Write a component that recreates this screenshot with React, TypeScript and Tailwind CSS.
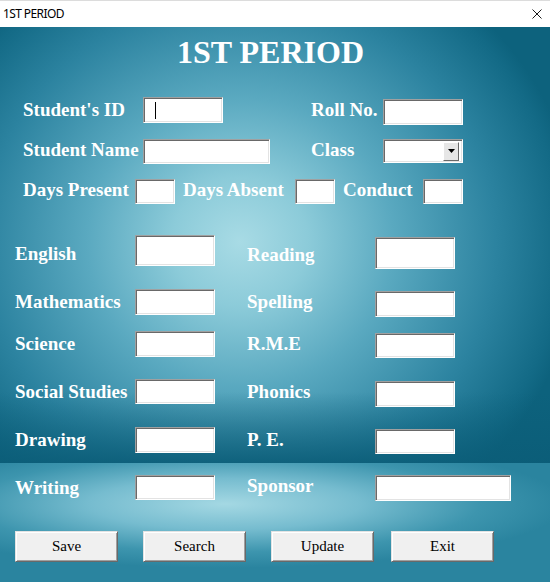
import type { ReactNode } from "react";

// Formulario "1ST PERIOD" (estilo WinForms): barra de título + panel turquesa.

const serif = "font-['Liberation_Serif','Times_New_Roman',serif]";

function Label({ children, className = "" }: { children: ReactNode; className?: string }) {
  return (
    <span
      className={`${serif} shrink-0 whitespace-nowrap text-[19px] font-bold leading-[22px] text-white ${className}`}
    >
      {children}
    </span>
  );
}

// Caja hundida (borde 3D clásico)
function Field({ className = "", children }: { className?: string; children?: ReactNode }) {
  return (
    <div
      className={`relative shrink-0 border border-t-[#a0a0a0] border-l-[#a0a0a0] border-b-white border-r-white bg-white shadow-[inset_1px_1px_0_#696969,inset_-1px_-1px_0_#e3e3e3] ${className}`}
    >
      {children}
    </div>
  );
}

function Boton({ children, className = "" }: { children: ReactNode; className?: string }) {
  return (
    <button
      type="button"
      className={`${serif} h-[31px] w-[103px] shrink-0 border border-t-[#e3e3e3] border-l-[#e3e3e3] border-b-[#696969] border-r-[#696969] bg-[#f0f0f0] text-[15px] text-black shadow-[inset_1px_1px_0_#ffffff,inset_-1px_-1px_0_#a0a0a0] ${className}`}
    >
      {children}
    </button>
  );
}

export default function App() {
  return (
    <div className="flex h-[582px] w-[550px] flex-col overflow-hidden">
      {/* Barra de título */}
      <div className="flex h-[27px] shrink-0 items-center justify-between border-t border-[#dcdcdc] bg-white pl-[3px] pr-[8px]">
        <span className="font-['Noto_Sans',sans-serif] text-[12px] tracking-[-0.6px] text-black">
          1ST PERIOD
        </span>
        <svg width="10" height="10" viewBox="0 0 10 10" aria-hidden>
          <path d="M0.5 0.5 L9.5 9.5 M9.5 0.5 L0.5 9.5" stroke="#1a1a1a" strokeWidth="1" />
        </svg>
      </div>

      {/* Panel principal: arriba foco radial, abajo banda clara horizontal */}
      <div className="flex flex-1 flex-col bg-no-repeat [background-image:linear-gradient(to_bottom,rgba(11,93,120,0)_365px,rgba(11,93,120,0.9)_436px),radial-gradient(ellipse_340px_320px_at_240px_215px,#a8dbe5_0%,#8ccbd9_20%,#5aa9c0_45%,#2c83a0_75%,#136a86_95%,#0d627d_100%),radial-gradient(ellipse_340px_64px_at_225px_477px,#a4d8e3_0%,#76bccf_40%,#3d95ae_75%,#2a849f_100%)] [background-size:100%_436px,100%_436px,100%_100%]">
        <h1
          className={`${serif} mt-[9px] h-[32px] pr-[9px] text-center text-[32px] font-bold leading-none text-white`}
        >
          1ST PERIOD
        </h1>

        {/* Datos del alumno */}
        <div className="mt-[29px] flex h-[28px] items-start pl-[23px]">
          <Label className="mt-[2px] w-[120px]">Student's ID</Label>
          <Field className="h-[26px] w-[80px]">
            <span className="absolute left-[11px] top-[4px] h-[17px] w-px bg-black" />
          </Field>
          <Label className="ml-[88px] mt-[2px] w-[72px]">Roll No.</Label>
          <Field className="mt-[2px] h-[26px] w-[80px]" />
        </div>

        <div className="mt-[14px] flex h-[26px] items-start pl-[23px]">
          <Label className="w-[120px]">Student Name</Label>
          <Field className="h-[25px] w-[127px]" />
          <Label className="ml-[41px] w-[72px]">Class</Label>
          <Field className="flex h-[24px] w-[80px] items-center justify-end pr-[3px]">
            <div className="flex h-[19px] w-[16px] items-center justify-center border border-t-white border-l-white border-b-[#696969] border-r-[#696969] bg-[#e6e6e6]">
              <svg width="7" height="4" viewBox="0 0 7 4" aria-hidden>
                <path d="M0 0 H7 L3.5 4 Z" fill="#000" />
              </svg>
            </div>
          </Field>
        </div>

        <div className="mt-[14px] flex h-[26px] items-start pl-[23px]">
          <Label className="w-[112px]">Days Present</Label>
          <Field className="h-[25px] w-[40px]" />
          <Label className="ml-[8px] w-[112px]">Days Absent</Label>
          <Field className="h-[25px] w-[40px]" />
          <Label className="ml-[8px] w-[80px]">Conduct</Label>
          <Field className="h-[25px] w-[40px]" />
        </div>

        {/* Materias */}
        <div className="mt-[30px] flex h-[34px] items-start pl-[15px]">
          <Label className="mt-[8px] w-[120px]">English</Label>
          <Field className="h-[31px] w-[80px]" />
          <Label className="ml-[32px] mt-[9px] w-[128px]">Reading</Label>
          <Field className="mt-[2px] h-[32px] w-[80px]" />
        </div>

        <div className="mt-[20px] flex h-[28px] items-start pl-[15px]">
          <Label className="mt-[2px] w-[120px]">Mathematics</Label>
          <Field className="h-[26px] w-[80px]" />
          <Label className="ml-[32px] mt-[2px] w-[128px]">Spelling</Label>
          <Field className="mt-[2px] h-[26px] w-[80px]" />
        </div>

        <div className="mt-[14px] flex h-[28px] items-start pl-[15px]">
          <Label className="mt-[2px] w-[120px]">Science</Label>
          <Field className="h-[26px] w-[80px]" />
          <Label className="ml-[32px] mt-[2px] w-[128px]">R.M.E</Label>
          <Field className="mt-[2px] h-[25px] w-[80px]" />
        </div>

        <div className="mt-[20px] flex h-[28px] items-start pl-[15px]">
          <Label className="mt-[2px] w-[120px]">Social Studies</Label>
          <Field className="h-[25px] w-[80px]" />
          <Label className="ml-[32px] mt-[2px] w-[128px]">Phonics</Label>
          <Field className="mt-[2px] h-[26px] w-[80px]" />
        </div>

        <div className="mt-[20px] flex h-[28px] items-start pl-[15px]">
          <Label className="mt-[2px] w-[120px]">Drawing</Label>
          <Field className="h-[26px] w-[80px]" />
          <Label className="ml-[32px] mt-[2px] w-[128px]">P. E.</Label>
          <Field className="mt-[2px] h-[25px] w-[80px]" />
        </div>

        <div className="mt-[20px] flex h-[26px] items-start pl-[15px]">
          <Label className="mt-[2px] w-[120px]">Writing</Label>
          <Field className="h-[25px] w-[80px]" />
          <Label className="ml-[32px] w-[128px]">Sponsor</Label>
          <Field className="h-[26px] w-[136px]" />
        </div>

        {/* Acciones */}
        <div className="mt-[30px] flex pl-[15px]">
          <Boton>Save</Boton>
          <Boton className="ml-[25px]">Search</Boton>
          <Boton className="ml-[25px]">Update</Boton>
          <Boton className="ml-[17px]">Exit</Boton>
        </div>
      </div>
    </div>
  );
}
